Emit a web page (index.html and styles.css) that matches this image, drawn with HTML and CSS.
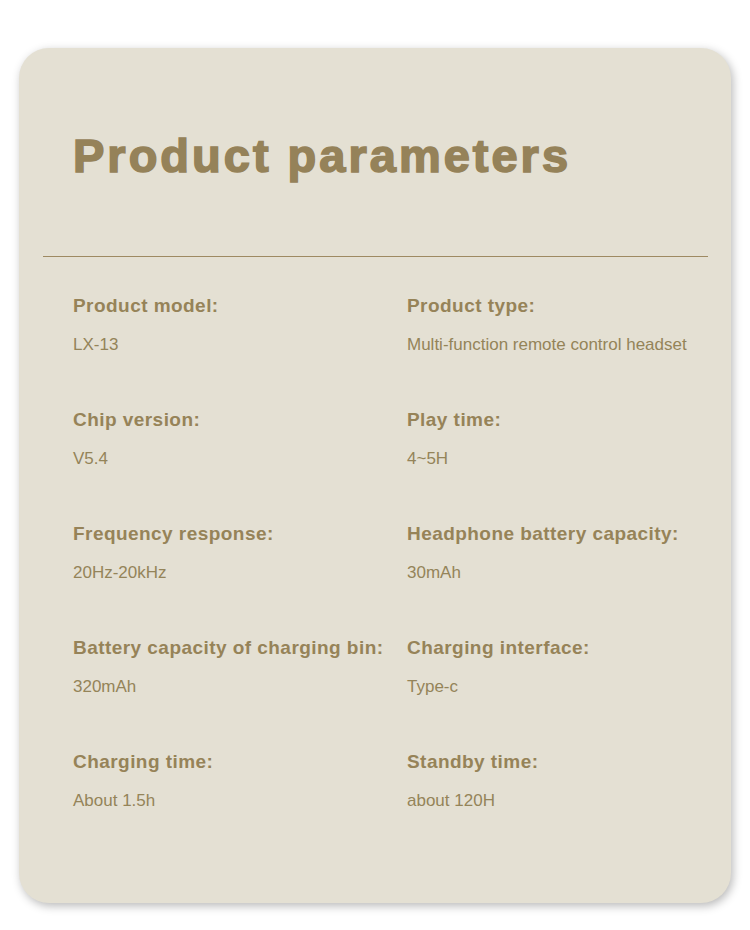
FILE: index.html
```html
<!DOCTYPE html>
<html lang="en">
<head>
<meta charset="utf-8">
<title>Product parameters</title>
<link rel="stylesheet" href="styles.css">
</head>
<body>
<div class="card">
  <h1 class="title">Product parameters</h1>
  <hr class="rule">
  <div class="params">
    <div class="param"><div class="label">Product model:</div><div class="value">LX-13</div></div>
    <div class="param"><div class="label">Product type:</div><div class="value">Multi-function remote control headset</div></div>
    <div class="param"><div class="label">Chip version:</div><div class="value">V5.4</div></div>
    <div class="param"><div class="label">Play time:</div><div class="value">4~5H</div></div>
    <div class="param"><div class="label">Frequency response:</div><div class="value">20Hz-20kHz</div></div>
    <div class="param"><div class="label">Headphone battery capacity:</div><div class="value">30mAh</div></div>
    <div class="param"><div class="label">Battery capacity of charging bin:</div><div class="value">320mAh</div></div>
    <div class="param"><div class="label">Charging interface:</div><div class="value">Type-c</div></div>
    <div class="param"><div class="label">Charging time:</div><div class="value">About 1.5h</div></div>
    <div class="param"><div class="label">Standby time:</div><div class="value">about 120H</div></div>
  </div>
</div>
</body>
</html>
```
FILE: styles.css
```css
html, body {
  margin: 0;
  padding: 0;
  background: #ffffff;
}
body {
  font-family: "Liberation Sans", Arial, sans-serif;
  padding-top: 48px;
  padding-bottom: 27px;
}
.card {
  margin: 0 19px;
  background: #e4e0d3;
  border-radius: 30px;
  box-shadow: 2px 3px 10px rgba(0, 0, 0, 0.28);
  padding: 84px 0 94px 0;
}
.title {
  margin: 0 0 0 54px;
  font-size: 47px;
  line-height: 47px;
  font-weight: 700;
  letter-spacing: 3px;
  color: #958259;
  -webkit-text-stroke: 1.6px #958259;
}
.rule {
  margin: 77px 23px 0 24px;
  border: 0;
  height: 1px;
  background: #9e8a62;
}
.params {
  margin: 39px 0 0 54px;
  display: grid;
  grid-template-columns: 334px auto;
  row-gap: 57px;
}
.label {
  font-size: 19px;
  line-height: 19px;
  font-weight: 700;
  letter-spacing: 0.45px;
  color: #968358;
}
.value {
  margin-top: 21px;
  font-size: 17px;
  line-height: 17px;
  color: #948459;
}
```
